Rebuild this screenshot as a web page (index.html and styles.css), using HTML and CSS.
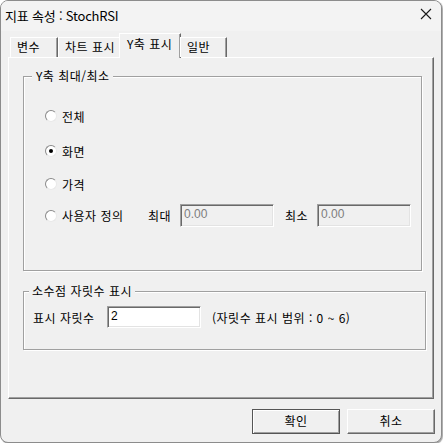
FILE: index.html
```html
<!DOCTYPE html>
<html lang="ko">
<head>
<meta charset="utf-8">
<title>지표 속성</title>
<link rel="stylesheet" href="styles.css">
</head>
<body>
<div class="window">
  <div class="titlebar">
    <span class="title">지표 속성 : StochRSI</span>
    <svg class="close" width="12" height="12" viewBox="0 0 12 12"><path d="M1 1L11 11M11 1L1 11" stroke="#1a1a1a" stroke-width="1.1" fill="none"/></svg>
  </div>
  <div class="content">
    <div class="tabs">
      <div class="tab t1">변수</div>
      <div class="tab t2">차트 표시</div>
      <div class="tab t3 active">Y축 표시</div>
      <div class="tab t4">일반</div>
    </div>
    <div class="panel">
      <div class="group g1">
        <div class="legend">Y축 최대/최소</div>
        <div class="row r1"><span class="radio"></span><span class="lbl">전체</span></div>
        <div class="row r2"><span class="radio checked"></span><span class="lbl">화면</span></div>
        <div class="row r3"><span class="radio"></span><span class="lbl">가격</span></div>
        <div class="row r4">
          <span class="radio"></span><span class="lbl user">사용자 정의</span>
          <span class="flbl">최대</span><div class="input disabled">0.00</div>
          <span class="flbl gapl">최소</span><div class="input disabled">0.00</div>
        </div>
      </div>
      <div class="group g2">
        <div class="legend">소수점 자릿수 표시</div>
        <div class="row r5">
          <span class="dlbl">표시 자릿수</span><div class="input">2</div>
          <span class="hint">(자릿수 표시 범위 : 0 ~ 6)</span>
        </div>
      </div>
    </div>
    <div class="buttons">
      <div class="btn default">확인</div>
      <div class="btn">취소</div>
    </div>
  </div>
</div>
</body>
</html>
```
FILE: styles.css
```css
html, body {
  margin: 0;
  padding: 0;
  background: #ffffff;
}
.window {
  box-sizing: border-box;
  width: 442px;
  height: 443px;
  border: 1px solid #8c8c8c;
  border-radius: 8px;
  background: #f0f0f0;
  overflow: hidden;
  box-shadow: 1px 1px 1px rgba(0,0,0,0.35);
  font-family: "Noto Sans CJK KR", "Liberation Sans", sans-serif;
  font-size: 12px;
  color: #000;
}
.titlebar {
  height: 30px;
  display: flex;
  align-items: center;
  justify-content: space-between;
  padding: 0 9px 0 4px;
  background: #f3f3f3;
  font-size: 13px;
}
.title {
  margin-top: -2px;
  letter-spacing: -0.2px;
}
.close {
  display: block;
  margin-top: -4px;
}
.content {
  padding: 2px 7px 0 7px;
  letter-spacing: 0.5px;
}
.tabs {
  display: flex;
  align-items: flex-end;
  height: 24px;
  padding-left: 2px;
  position: relative;
  z-index: 1;
}
.tab {
  box-sizing: border-box;
  height: 20px;
  line-height: 18px;
  padding-left: 6px;
  border-top: 1px solid #ffffff;
  border-left: 1px solid #ffffff;
  border-right: 1px solid #696969;
  box-shadow: inset -1px 0 0 #a0a0a0;
  background: #f0f0f0;
}
.t1 { width: 48px; }
.t2 { width: 63px; }
.t3 { width: 62px; }
.t4 { width: 47px; }
.tab.active {
  height: 25px;
  margin: 0 -1px -1px -2px;
  padding-top: 0;
  line-height: 20px;
  padding-left: 7px;
}
.panel {
  box-sizing: border-box;
  width: 426px;
  height: 342px;
  border-style: solid;
  border-width: 1px;
  border-color: #ffffff #696969 #696969 #ffffff;
  box-shadow: inset -1px -1px 0 #a0a0a0;
  padding: 18px 0 0 14px;
}
.group {
  box-sizing: border-box;
  border: 1px solid #a0a0a0;
  box-shadow: 1px 1px 0 #ffffff, inset 1px 1px 0 #ffffff;
}
.g1 {
  width: 399px;
  height: 195px;
}
.g2 {
  width: 403px;
  height: 59px;
  margin-top: 20px;
}
.legend {
  width: fit-content;
  margin: -9px 0 0 8px;
  padding: 0 3px 0 4px;
  line-height: 16px;
  background: #f0f0f0;
}
.g2 .legend {
  margin-left: 5px;
  padding-left: 3px;
}
.row {
  display: flex;
  align-items: center;
  height: 20px;
  padding-left: 21px;
}
.r1 { margin-top: 22px; }
.r2 { margin-top: 15px; }
.r3 { margin-top: 13px; }
.r4 { margin-top: 10px; height: 23px; }
.radio {
  box-sizing: border-box;
  width: 12px;
  height: 12px;
  border-radius: 50%;
  border: 1px solid;
  border-color: #8a8a8a #e8e8e8 #e8e8e8 #8a8a8a;
  background: #ffffff;
  margin-right: 5px;
  display: flex;
  align-items: center;
  justify-content: center;
  flex: none;
}
.radio.checked::after {
  content: "";
  width: 4px;
  height: 4px;
  border-radius: 50%;
  background: #000;
}
.lbl.user { width: 86px; }
.flbl { width: 32px; }
.gapl { margin-left: 11px; }
.input {
  box-sizing: border-box;
  width: 94px;
  height: 23px;
  border: 1px solid;
  border-color: #a0a0a0 #ffffff #ffffff #a0a0a0;
  box-shadow: inset 1px 1px 0 #696969, inset -1px -1px 0 #e3e3e3;
  background: #ffffff;
  font-family: "Liberation Sans", Arial, sans-serif;
  font-size: 12px;
  letter-spacing: 0;
  line-height: 19px;
  padding-left: 3px;
}
.input.disabled {
  background: #f0f0f0;
  color: #7d7d7d;
}
.g2 .row {
  padding-left: 9px;
  height: 22px;
}
.r5 { margin-top: 7px; }
.r5 .input { height: 22px; line-height: 18px; }
.dlbl { width: 74px; }
.hint { margin-left: 11px; }
.buttons {
  display: flex;
  justify-content: flex-end;
  gap: 7px;
  margin-top: 10px;
  margin-right: -1px;
}
.btn {
  box-sizing: border-box;
  width: 88px;
  height: 25px;
  line-height: 22px;
  text-align: center;
  border: 1px solid;
  border-color: #ffffff #696969 #696969 #ffffff;
  box-shadow: inset -1px -1px 0 #a0a0a0;
  background: #f0f0f0;
}
.btn.default {
  border-color: #555555;
  box-shadow: inset 1px 1px 0 #ffffff, inset -1px -1px 0 #a0a0a0;
}
```
